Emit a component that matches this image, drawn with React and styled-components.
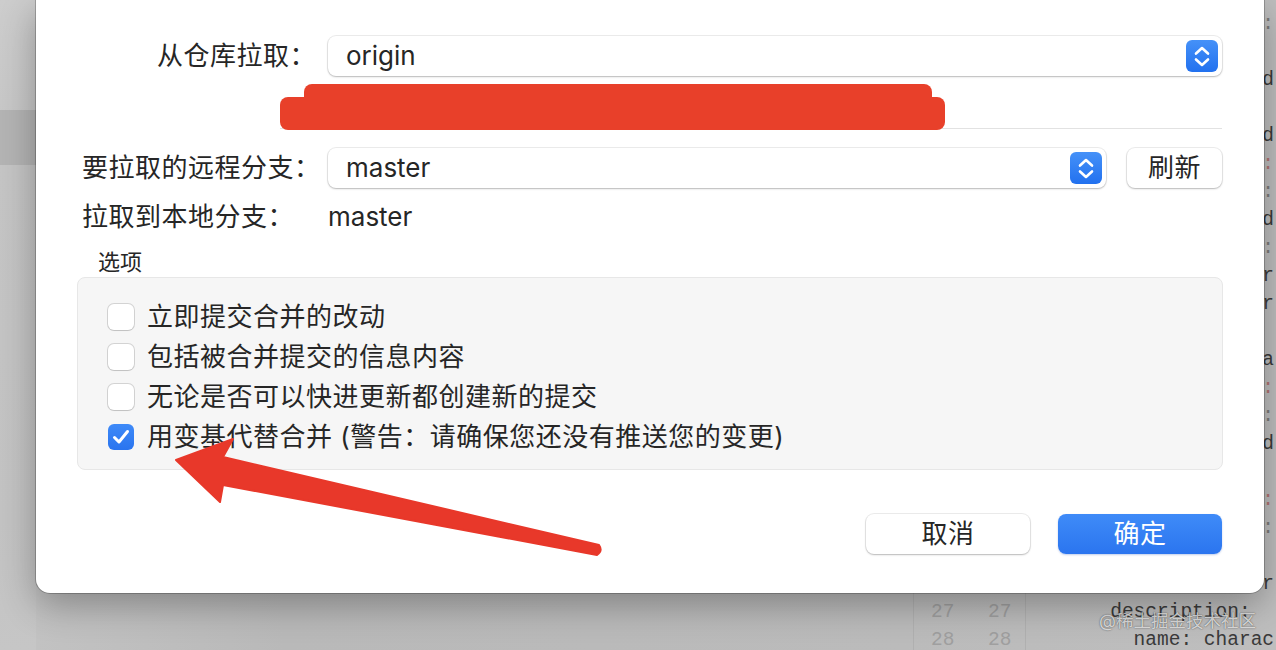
import React from 'react';
import styled, { createGlobalStyle } from 'styled-components';

const FONT = `Inter, "Noto Sans CJK SC", sans-serif`;
const MONO = `"Liberation Mono", "DejaVu Sans Mono", monospace`;

const GlobalStyle = createGlobalStyle`
  html, body {
    margin: 0;
    padding: 0;
    overflow: hidden;
  }
  body {
    font-family: ${FONT};
  }
`;

const Screen = styled.div`
  position: relative;
  width: 1276px;
  height: 650px;
  overflow: hidden;
  font-family: ${FONT};
  color: #262626;
`;

/* ---------- blurred IDE behind the sheet ---------- */

const Backdrop = styled.div`
  display: grid;
  grid-template-columns: 36px 1fr;
  height: 100%;
  background: #bdbdbd;
`;

const Sidebar = styled.div`
  padding-top: 110px;
  background: linear-gradient(#cdcdcd, #c5c5c5 25%, #c3c3c3 80%, #c6c6c6);
`;

const SidebarRow = styled.div`
  height: 55px;
  background: ${p => (p.$selected ? '#b4b4b4' : 'transparent')};
`;

const Editor = styled.div`
  display: grid;
  grid-template-columns: 1fr 113px 250px;
  background: linear-gradient(90deg, #c2c2c2, #b9b9b9 20%, #bbbbbb 70%, #bebebe);
`;

const Pane = styled.div`
  display: flex;
  flex-direction: column;
  justify-content: flex-end;
  margin-bottom: -4px;
  padding-left: ${p => p.$pad || 0}px;
  overflow: hidden;
  font-family: ${MONO};
  font-size: 19.5px;
  line-height: 28px;
  white-space: pre;
  color: #3a3a3a;
`;

const Gutter = styled.div`
  display: grid;
  grid-template-columns: 57px 1fr;
  margin-bottom: -4px;
  padding-left: 17px;
  border-left: 1px solid #b0b0b0;
  border-right: 1px solid #b0b0b0;
  font-family: ${MONO};
  font-size: 19.5px;
  line-height: 28px;
  color: #9f9f9f;
`;

const NumberCol = styled.div`
  display: flex;
  flex-direction: column;
  justify-content: flex-end;
`;

const CodeLine = styled.div`
  height: 28px;
`;

const Mark = styled.span`
  color: ${p => (p.$tone === 'red' ? '#b27474' : p.$tone === 'dot' ? '#7b7b7b' : '#3a3a3a')};
`;

const Watermark = styled.div`
  position: absolute;
  right: 20px;
  bottom: 18px;
  font-size: 17.5px;
  color: rgba(255, 255, 255, 0.8);
  text-shadow: 0 0 1px rgba(0, 0, 0, 0.55), 0 0 2px rgba(0, 0, 0, 0.25);
`;

/* ---------- sheet ---------- */

const Sheet = styled.div`
  position: absolute;
  top: 0;
  left: 36px;
  width: 1228px;
  box-sizing: border-box;
  padding: 36px 42px 39px 46px;
  background: #fff;
  border-radius: 0 0 14px 14px;
  box-shadow: 0 0 0 1px rgba(0, 0, 0, 0.22), 0 12px 36px rgba(0, 0, 0, 0.3);
`;

const FieldRow = styled.div`
  display: grid;
  grid-template-columns: 246px 1fr;
  align-items: center;
  height: ${p => p.$h || 40}px;
  margin-top: ${p => p.$mt || 0}px;
`;

const Label = styled.div`
  font-size: 26px;
  line-height: 30px;
  letter-spacing: 0.5px;
  white-space: nowrap;
  text-align: ${p => p.$align || 'right'};
  padding-right: ${p => (p.$align === 'left' ? 0 : 12)}px;
`;

const Value = styled.div`
  font-size: 26px;
  line-height: 30px;
`;

const Controls = styled.div`
  display: flex;
  gap: 21px;
`;

const Select = styled.div`
  flex: 1;
  display: flex;
  align-items: center;
  height: 40px;
  box-sizing: border-box;
  padding: 0 4px 0 18px;
  border-radius: 8px;
  background: #fff;
  box-shadow: 0 0 0 1px rgba(0, 0, 0, 0.07), 0 1px 2px rgba(0, 0, 0, 0.22);
`;

const SelectText = styled.span`
  flex: 1;
  font-size: 26px;
  line-height: 30px;
`;

const Stepper = styled.div`
  display: flex;
  align-items: center;
  justify-content: center;
  width: 32px;
  height: 32px;
  border-radius: 6px;
  background: linear-gradient(#4591f8, #2271ef);
`;

const PushButton = styled.div`
  display: flex;
  align-items: center;
  justify-content: center;
  width: ${p => p.$w}px;
  height: 40px;
  border-radius: 8px;
  font-size: 26px;
  line-height: 30px;
  letter-spacing: 0.5px;
  color: ${p => (p.$primary ? '#fff' : '#262626')};
  background: ${p => (p.$primary ? 'linear-gradient(#3f8bf8, #2b75ef)' : '#fff')};
  box-shadow: ${p =>
    p.$primary
      ? '0 1px 2px rgba(0, 60, 180, 0.25)'
      : '0 0 0 1px rgba(0, 0, 0, 0.07), 0 1px 2px rgba(0, 0, 0, 0.22)'};
`;

const SepBlock = styled.div`
  position: relative;
  height: 72px;
  box-sizing: border-box;
  padding: 52px 0 0 198px;
`;

const Rule = styled.div`
  height: 1px;
  background: #e2e2e2;
`;

const Redact = styled.div`
  position: absolute;
  left: ${p => p.$x}px;
  top: ${p => p.$y}px;
  width: ${p => p.$w}px;
  height: ${p => p.$h}px;
  border-radius: 8px;
  background: #e8402a;
`;

const GroupTitle = styled.div`
  margin: 15px 0 0 16px;
  font-size: 22px;
  line-height: 30px;
`;

const Group = styled.div`
  margin: 0 -1px 0 -5px;
  padding: 19px 0 12px 30px;
  border: 1px solid #e7e7e7;
  border-radius: 8px;
  background: #f6f6f6;
`;

const CheckRow = styled.div`
  display: flex;
  align-items: center;
  gap: 13px;
  height: 40px;
  font-size: 26px;
  line-height: 30px;
  letter-spacing: 0.5px;
`;

const Box = styled.div`
  display: flex;
  align-items: center;
  justify-content: center;
  width: 26px;
  height: 26px;
  box-sizing: border-box;
  border-radius: 6px;
  background: ${p => (p.$on ? 'linear-gradient(#3e8af8, #2a74ef)' : '#fff')};
  box-shadow: ${p =>
    p.$on ? 'none' : '0 0 0 1px rgba(0, 0, 0, 0.14), 0 1px 1px rgba(0, 0, 0, 0.08)'};
`;

const Footer = styled.div`
  display: flex;
  justify-content: flex-end;
  gap: 28px;
  margin-top: 44px;
`;

const Overlay = styled.svg`
  position: absolute;
  top: 0;
  left: 0;
  pointer-events: none;
`;

const Chevrons = () => (
  <svg width="32" height="32" viewBox="0 0 32 32">
    <path
      d="M10 13.5 L16 8 L22 13.5 M10 19.5 L16 25 L22 19.5"
      fill="none"
      stroke="#fff"
      strokeWidth="2.6"
      strokeLinecap="round"
      strokeLinejoin="round"
    />
  </svg>
);

const Tick = () => (
  <svg width="26" height="26" viewBox="0 0 26 26">
    <path
      d="M6.5 13.5 L11 18 L19.5 7.5"
      fill="none"
      stroke="#fff"
      strokeWidth="3"
      strokeLinecap="round"
      strokeLinejoin="round"
    />
  </svg>
);

const edge = [
  [':', 'dot'], [''], ['d'], [''], ['d'], [':', 'red'], [':', 'dot'], ['ed'],
  [':', 'dot'], ['r'], ['r'], [''], ['a'], [':', 'red'], [':', 'dot'], ['d'],
  [''], [':', 'red'], [':', 'dot'], [''], ['tr'],
];

const options = [
  { text: '立即提交合并的改动', on: false },
  { text: '包括被合并提交的信息内容', on: false },
  { text: '无论是否可以快进更新都创建新的提交', on: false },
  { text: '用变基代替合并 (警告：请确保您还没有推送您的变更)', on: true },
];

export default function App() {
  return (
    <Screen>
      <GlobalStyle />
      <Backdrop>
        <Sidebar>
          <SidebarRow $selected />
        </Sidebar>
        <Editor>
          <Pane />
          <Gutter>
            <NumberCol>
              <CodeLine>27</CodeLine>
              <CodeLine>28</CodeLine>
            </NumberCol>
            <NumberCol>
              <CodeLine>27</CodeLine>
              <CodeLine>28</CodeLine>
            </NumberCol>
          </Gutter>
          <Pane $pad={14}>
            {edge.map(([tail, tone], i) => (
              <CodeLine key={i}>
                {' '.repeat(20 - Math.max(tail.length, 1))}
                <Mark $tone={tone}>{tail}</Mark>
              </CodeLine>
            ))}
            <CodeLine>{'      description:'}</CodeLine>
            <CodeLine>{'        name: charac'}</CodeLine>
          </Pane>
        </Editor>
      </Backdrop>
      <Watermark>@稀土掘金技术社区</Watermark>

      <Sheet>
        <FieldRow>
          <Label>从仓库拉取：</Label>
          <Select>
            <SelectText>origin</SelectText>
            <Stepper>
              <Chevrons />
            </Stepper>
          </Select>
        </FieldRow>

        <SepBlock>
          <Rule />
          <Redact $x={222} $y={8} $w={628} $h={28} />
          <Redact $x={198} $y={21} $w={665} $h={33} />
        </SepBlock>

        <FieldRow>
          <Label>要拉取的远程分支：</Label>
          <Controls>
            <Select>
              <SelectText>master</SelectText>
              <Stepper>
                <Chevrons />
              </Stepper>
            </Select>
            <PushButton $w={95}>刷新</PushButton>
          </Controls>
        </FieldRow>

        <FieldRow $h={30} $mt={14}>
          <Label $align="left">拉取到本地分支：</Label>
          <Value>master</Value>
        </FieldRow>

        <GroupTitle>选项</GroupTitle>
        <Group>
          {options.map(o => (
            <CheckRow key={o.text}>
              <Box $on={o.on}>{o.on && <Tick />}</Box>
              <span>{o.text}</span>
            </CheckRow>
          ))}
        </Group>

        <Footer>
          <PushButton $w={164}>取消</PushButton>
          <PushButton $w={164} $primary>
            确定
          </PushButton>
        </Footer>
      </Sheet>

      <Overlay width="1276" height="650" viewBox="0 0 1276 650">
        <path
          d="M176 460 L233 439 L223 457 L599 545 Q603 551 597 555 L223 485 L220 502 Z"
          fill="#e8382a"
          stroke="#e8382a"
          strokeWidth="2"
          strokeLinejoin="round"
        />
      </Overlay>
    </Screen>
  );
}
